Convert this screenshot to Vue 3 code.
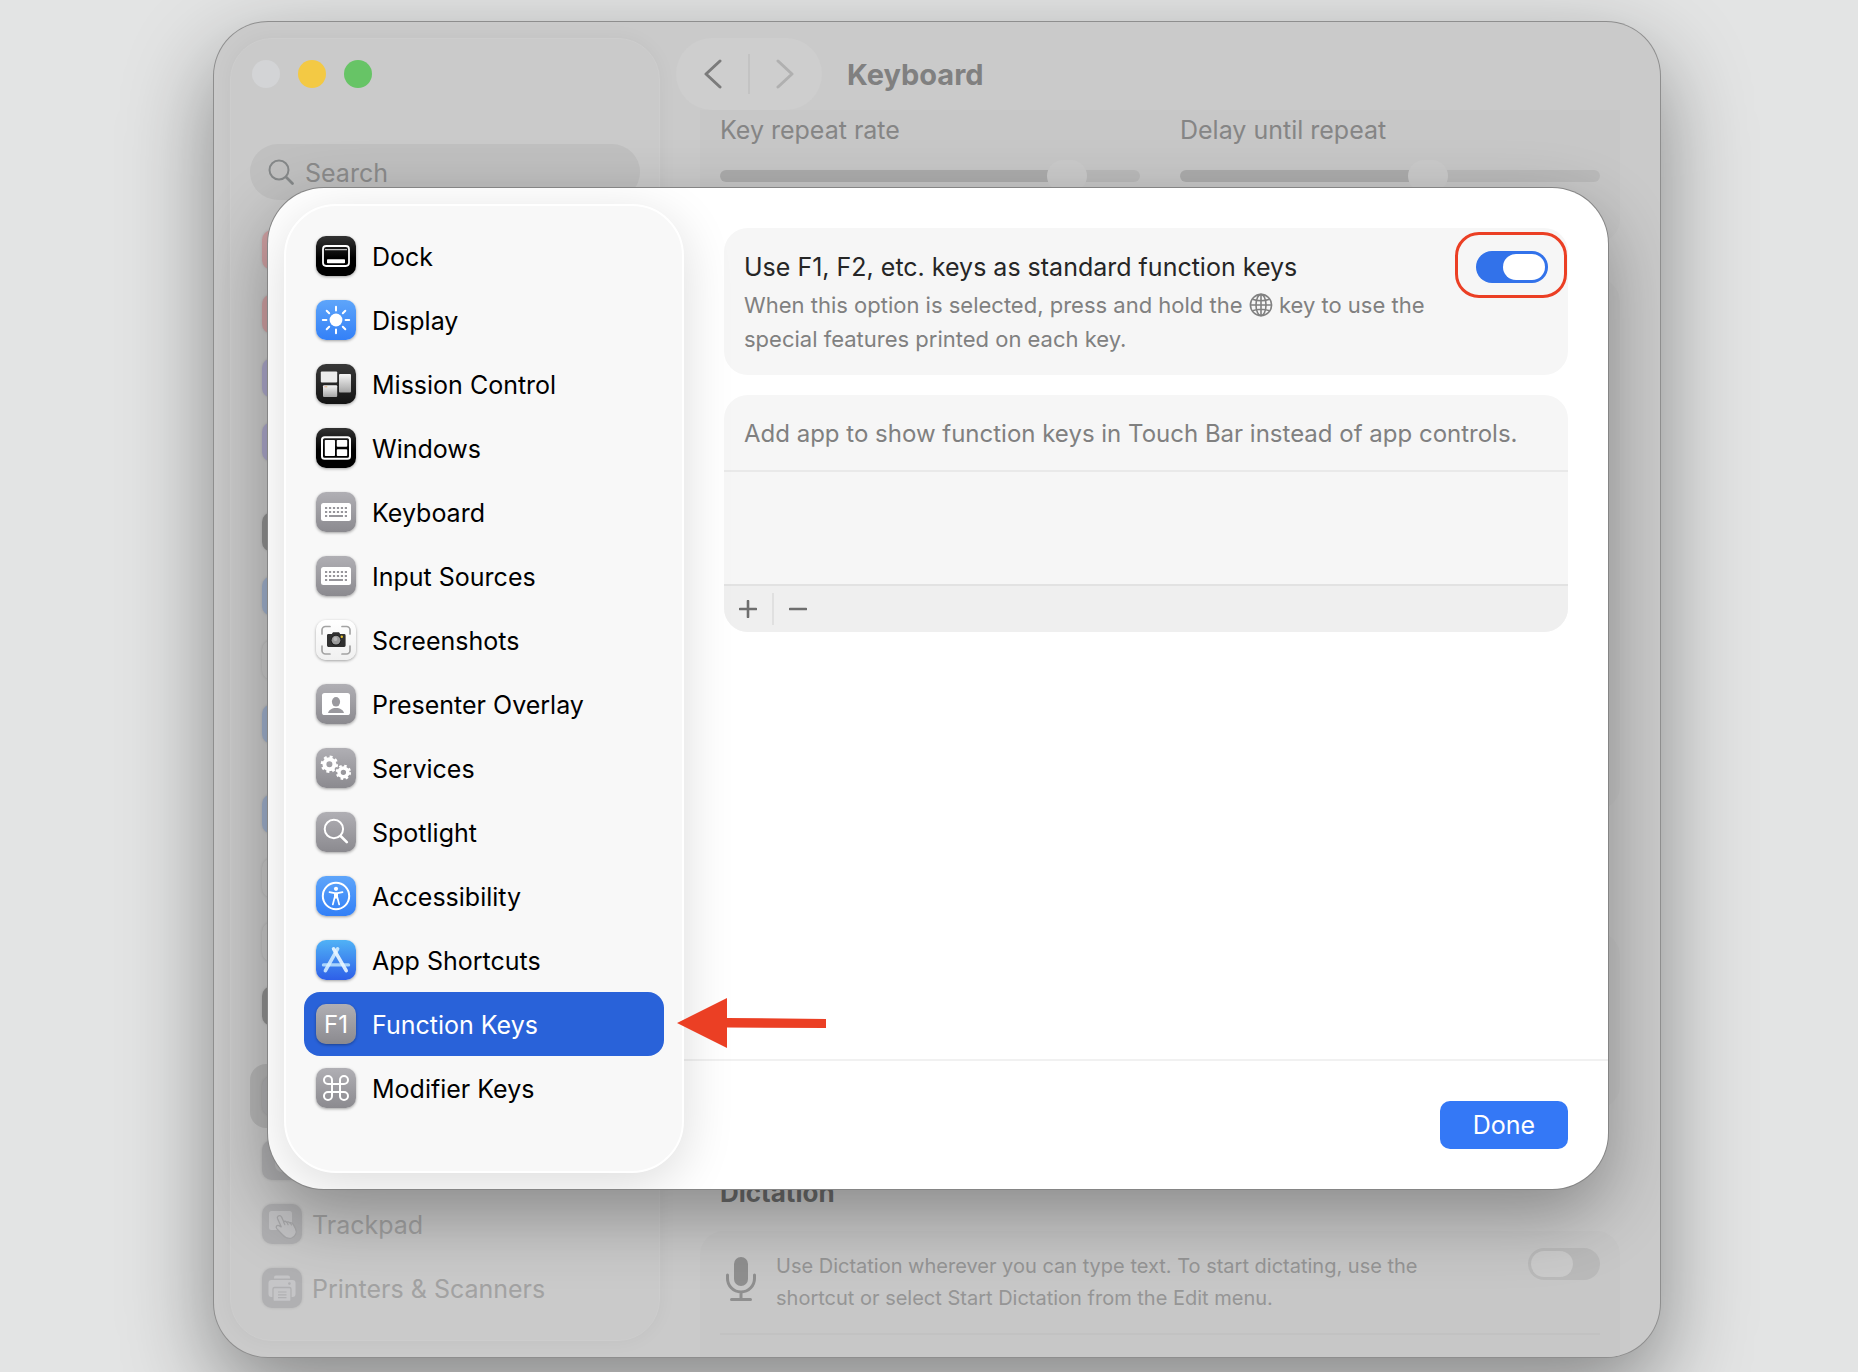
<script setup>
import { ref } from 'vue'

const keyboardGlyph = `
  <rect x="5" y="11" width="30" height="18" rx="2.5" fill="#fff"/>
  <path d="M9 16h22M9 20h22" stroke="#97969b" stroke-width="2.2" stroke-dasharray="2.2 1.76"/>
  <path d="M9 24h2.2M13 24h14M28.8 24H31" stroke="#97969b" stroke-width="2"/>`

const gear = (cx, cy, r) => {
  const ring = r * 0.58
  const teeth = r * 0.86
  const step = (2 * Math.PI * teeth) / 16
  return `<circle cx="${cx}" cy="${cy}" r="${ring}" fill="none" stroke="#fff" stroke-width="${r * 0.46}"/>
    <circle cx="${cx}" cy="${cy}" r="${teeth}" fill="none" stroke="#fff" stroke-width="${r * 0.3}" stroke-dasharray="${step}"/>`
}

// Sidebar entries of the keyboard shortcuts sheet
const shortcuts = [
  {
    label: 'Dock',
    tone: 'black',
    glyph: `<rect x="7" y="10" width="26" height="20" rx="3.2" fill="none" stroke="#fff" stroke-width="1.8"/>
      <path d="M9 13.6h22" stroke="#bbb" stroke-width="1.4"/>
      <rect x="11" y="23.2" width="18" height="4" rx="0.8" fill="#fff"/>`,
  },
  {
    label: 'Display',
    tone: 'blue',
    glyph: `<circle cx="20" cy="20" r="6.4" fill="#fff"/>
      <path d="M20 6.8v3.6M20 29.6v3.6M6.8 20h3.6M29.6 20h3.6M10.7 10.7l2.5 2.5M26.8 26.8l2.5 2.5M29.3 10.7l-2.5 2.5M13.2 26.8l-2.5 2.5" stroke="#fff" stroke-width="2" stroke-linecap="round"/>`,
  },
  {
    label: 'Mission Control',
    tone: 'charcoal',
    glyph: `<defs><linearGradient id="pane" x1="0" y1="0" x2="0" y2="1"><stop offset="0" stop-color="#f4f4f4"/><stop offset="1" stop-color="#a4a4a4"/></linearGradient></defs>
      <rect x="4.8" y="7.6" width="16.4" height="11" rx="1" fill="#ececec"/>
      <rect x="23" y="10" width="12" height="18.6" rx="1" fill="url(#pane)"/>
      <rect x="7" y="21.2" width="14.2" height="11.8" rx="1" fill="url(#pane)"/>
      <path d="M8.6 22.8h1" stroke="#e0705a"/><path d="M10.2 22.8h1" stroke="#d8b04c"/>`,
  },
  {
    label: 'Windows',
    tone: 'black',
    glyph: `<rect x="6" y="9.2" width="28" height="21.6" rx="2.6" fill="none" stroke="#fff" stroke-width="2"/>
      <rect x="8.8" y="12" width="10.2" height="16" rx="0.8" fill="#fff"/>
      <rect x="20.8" y="12" width="10.4" height="6.8" rx="0.8" fill="#fff"/>
      <rect x="20.8" y="21.2" width="10.4" height="6.8" rx="0.8" fill="#fff"/>`,
  },
  { label: 'Keyboard', tone: 'gray', glyph: keyboardGlyph },
  { label: 'Input Sources', tone: 'gray', glyph: keyboardGlyph },
  {
    label: 'Screenshots',
    tone: 'white',
    glyph: `<path d="M6 14v-4a3.5 3.5 0 0 1 3.5-3.5H14M26 6.5h4.5A3.5 3.5 0 0 1 34 10v4M34 26v4.5a3.5 3.5 0 0 1-3.5 3.5H26M14 34H9.5A3.5 3.5 0 0 1 6 30.5V26" fill="none" stroke="#a3a3a3" stroke-width="1.7" stroke-linecap="round"/>
      <path d="M15.8 14l1.2-1.8h6l1.2 1.8h4a1.4 1.4 0 0 1 1.4 1.4v10.2a1.4 1.4 0 0 1-1.4 1.4H12.4a1.4 1.4 0 0 1-1.4-1.4V15.4A1.4 1.4 0 0 1 12.4 14z" fill="#303030"/>
      <circle cx="20" cy="20.2" r="5.2" fill="#1a1a1a"/><circle cx="20" cy="20.2" r="4.4" fill="#9a9a9a"/><circle cx="19.4" cy="19" r="2" fill="#b9b9b9"/>
      <circle cx="25.8" cy="16.7" r="1.2" fill="#e8c22a"/>`,
  },
  {
    label: 'Presenter Overlay',
    tone: 'gray',
    glyph: `<rect x="6" y="9" width="28" height="22" rx="2.6" fill="#fff"/>
      <ellipse cx="20" cy="17.8" rx="4.1" ry="4.8" fill="#9a999e"/>
      <path d="M12 29c.6-3 4-5 8-5s7.400 2 8 5z" fill="#9a999e"/>`,
  },
  { label: 'Services', tone: 'gray', glyph: gear(13.4, 16.2, 8.6) + gear(27.4, 24.3, 7.6) },
  {
    label: 'Spotlight',
    tone: 'gray',
    glyph: `<circle cx="17.9" cy="17" r="9.2" fill="none" stroke="#fff" stroke-width="2"/>
      <path d="M24.6 24l6.200 6.200" stroke="#fff" stroke-width="2.6" stroke-linecap="round"/>`,
  },
  {
    label: 'Accessibility',
    tone: 'blue',
    glyph: `<circle cx="20" cy="20" r="13.2" fill="none" stroke="#fff" stroke-width="2"/>
      <circle cx="20" cy="12.8" r="2.1" fill="#fff"/>
      <path d="M13.5 16.2l5 1h3l5-1" fill="none" stroke="#fff" stroke-width="1.7" stroke-linecap="round" stroke-linejoin="round"/>
      <path d="M18 17h4v5.500H18z" fill="#fff"/>
      <path d="M18.6 21.500l-1.800 7M21.400 21.500l1.800 7" stroke="#fff" stroke-width="1.7" stroke-linecap="round"/>`,
  },
  {
    label: 'App Shortcuts',
    tone: 'store',
    glyph: `<path d="M7.5 24.9h25" stroke="#a9d4fb" stroke-width="3.4" stroke-linecap="round"/>
      <path d="M21.6 8.8L9.4 30.6" stroke="#d8f0ff" stroke-opacity=".85" stroke-width="3.6" stroke-linecap="round"/>
      <path d="M17.6 8.8l12.600 21.8" stroke="#eaf6ff" stroke-opacity=".9" stroke-width="3.6" stroke-linecap="round"/>`,
  },
  {
    label: 'Function Keys',
    tone: 'gray',
    glyph: `<text x="20" y="28.5" text-anchor="middle" font-size="24" fill="#fff">F1</text>`,
  },
  {
    label: 'Modifier Keys',
    tone: 'gray',
    glyph: `<path transform="translate(4 4) scale(1.333)" d="M15 6v12a3 3 0 1 0 3-3H6a3 3 0 1 0 3 3V6a3 3 0 1 0-3 3h12a3 3 0 1 0-3-3" fill="none" stroke="#fff" stroke-width="1.5"/>`,
  },
]

// Dimmed settings list, grouped the way System Settings groups its panes
const paneGroups = [
  [{ tone: 'red' }, { tone: 'red' }, { tone: 'purple' }, { tone: 'purple' }],
  [{ tone: 'dark' }, { tone: 'azure' }, { tone: 'pale' }, { tone: 'azure' }],
  [{ tone: 'azure' }, { tone: 'pale' }, { tone: 'pale' }, { tone: 'dark' }],
  [
    { tone: 'dim', current: true },
    { tone: 'dim', glyph: '<rect x="13" y="8" width="14" height="24" rx="7" fill="#bebebf"/>' },
    {
      tone: 'dim',
      label: 'Trackpad',
      glyph: `<rect x="7" y="7" width="23" height="19" rx="2.5" fill="#c4c4c6"/>
        <path d="M16.3 12c1.400-.8 2.700-.3 3.400 1.200l2 4.600c1-.8 2.100-.5 2.900.5 1-.8 2.200-.5 3 .6 1.500-.6 3 .1 3.900 2l2 3.700c2 4-.2 8.200-4 9.400-3.500 1-6.400-.2-9-3.200l-5.700-6.200c-1.500-1.800 0-3.600 2-3l2.400 1.200-3.700-8.200c-.5-1.200-.1-2 .8-2.600z" fill="#c4c4c6" stroke="#a8a8aa" stroke-width="1.3" stroke-linejoin="round"/>
        <path d="M21.8 18.400l1 2.200M25.2 18.800l.9 2M28.6 19.200l.8 1.800" stroke="#a8a8aa" stroke-width="1.2" stroke-linecap="round"/>`,
    },
    {
      tone: 'dim',
      label: 'Printers & Scanners',
      glyph: `<path d="M12 10.500V9.500A2 2 0 0 1 14 7.500h12a2 2 0 0 1 2 2v1z" fill="#c5c5c7"/>
        <rect x="6.5" y="12" width="27" height="17" rx="3" fill="#c5c5c7"/>
        <rect x="11" y="19.5" width="18" height="14" rx="1.5" fill="#c5c5c7" stroke="#b0b0b2" stroke-width="1.3"/>
        <path d="M16 24h8.500M16 26.800h8.500M16 29.600h8.500" stroke="#b0b0b2" stroke-width="1.2"/>
        <circle cx="27.4" cy="15.6" r="1.3" fill="#b0b0b2"/>`,
    },
  ],
]

const selected = ref('Function Keys')
const standardKeys = ref(true)
const dictation = ref(false)
const repeatRate = ref(86)
const repeatDelay = ref(60)
</script>

<template>
  <div class="desktop">
    <div class="window">
      <aside class="panes">
        <div class="lights">
          <button class="light" aria-label="Close"></button>
          <button class="light light-min" aria-label="Minimize"></button>
          <button class="light light-max" aria-label="Zoom"></button>
        </div>
        <label class="search">
          <svg width="27" height="27" viewBox="0 0 27 27" fill="none" stroke="#858889" stroke-width="2" stroke-linecap="round">
            <circle cx="11" cy="11" r="9.5" />
            <path d="M18 18l6.500 6.500" stroke-width="2.8" />
          </svg>
          <input type="text" placeholder="Search" aria-label="Search" />
        </label>
        <nav class="pane-groups">
          <div v-for="(group, g) in paneGroups" :key="g" class="pane-group">
            <a v-for="(pane, p) in group" :key="p" href="#" class="pane" :class="{ current: pane.current }">
              <svg class="icon" :class="pane.tone" viewBox="0 0 40 40" v-html="pane.glyph"></svg>
              <span v-if="pane.label" class="item-label">{{ pane.label }}</span>
            </a>
          </div>
        </nav>
      </aside>

      <main class="settings">
        <header class="toolbar">
          <div class="history">
            <button aria-label="Back">
              <svg width="18" height="30" viewBox="0 0 18 30"><path d="M16 2L2 15l14 13" fill="none" stroke="#7b7b7b" stroke-width="3" stroke-linecap="round" stroke-linejoin="round" /></svg>
            </button>
            <span class="history-line"></span>
            <button aria-label="Forward">
              <svg width="18" height="30" viewBox="0 0 18 30"><path d="M2 2l14 13L2 28" fill="none" stroke="#b0b0b0" stroke-width="3" stroke-linecap="round" stroke-linejoin="round" /></svg>
            </button>
          </div>
          <h1>Keyboard</h1>
        </header>

        <section class="group sliders">
          <label class="slider">
            Key repeat rate
            <input v-model="repeatRate" type="range" min="0" max="100" :style="{ '--fill': repeatRate + '%' }" />
          </label>
          <label class="slider">
            Delay until repeat
            <input v-model="repeatDelay" type="range" min="0" max="100" :style="{ '--fill': repeatDelay + '%' }" />
          </label>
        </section>
        <section class="group filler filler-tall"></section>
        <section class="group filler"></section>

        <h2>Dictation</h2>
        <section class="group dictation">
          <div class="dictation-row">
            <svg class="mic" width="30" height="44" viewBox="0 0 30 44" fill="none" stroke="#8f8f8f" stroke-width="3" stroke-linecap="round">
              <rect x="8" y="0" width="14" height="29" rx="7" fill="#8f8f8f" stroke="none" />
              <path d="M1.5 18v3.500a13.500 13.500 0 0 0 27 0V18M15 35v7M5.500 42.500h19" />
            </svg>
            <label for="dictation">
              Use Dictation wherever you can type text. To start dictating, use the shortcut or select Start Dictation
              from the Edit menu.
            </label>
            <input id="dictation" v-model="dictation" type="checkbox" class="switch muted" />
          </div>
        </section>
      </main>

      <div class="sheet" role="dialog" aria-label="Keyboard">
        <nav class="shortcuts">
          <button
            v-for="item in shortcuts"
            :key="item.label"
            class="shortcut"
            :class="{ selected: item.label === selected }"
            @click="selected = item.label"
          >
            <svg class="icon" :class="item.tone" viewBox="0 0 40 40" v-html="item.glyph"></svg>
            <span class="item-label">{{ item.label }}</span>
            <svg v-if="item.label === selected" class="arrow" width="150" height="50" viewBox="0 0 150 50">
              <path d="M0 25L50 0v20l99 1v9l-99-.5V50z" fill="#eb3f24" />
            </svg>
          </button>
        </nav>

        <div class="detail">
          <div class="cards">
            <section class="card option">
              <div class="option-text">
                <label for="standard-keys">Use F1, F2, etc. keys as standard function keys</label>
                <p id="standard-keys-note">
                  When this option is selected, press and hold the
                  <svg class="globe" width="24" height="24" viewBox="0 0 24 24" fill="none" stroke="#808080" stroke-width="1.6">
                    <circle cx="12" cy="12" r="10.6" />
                    <ellipse cx="12" cy="12" rx="5" ry="10.6" />
                    <path d="M12 1.4v21.200M1.400 12h21.200M3.500 6.200q8.500 3 17 0M3.500 17.800q8.500-3 17 0" />
                  </svg>
                  key to use the special features printed on each key.
                </p>
              </div>
              <span class="highlight">
                <input
                  id="standard-keys"
                  v-model="standardKeys"
                  type="checkbox"
                  class="switch"
                  aria-describedby="standard-keys-note"
                />
              </span>
            </section>

            <section class="card apps">
              <p>Add app to show function keys in Touch Bar instead of app controls.</p>
              <div class="app-list"></div>
              <div class="app-actions">
                <button aria-label="Add app">
                  <svg width="18" height="18" viewBox="0 0 18 18"><path d="M9 1v16M1 9h16" stroke="#6e6e6e" stroke-width="2.6" stroke-linecap="round" /></svg>
                </button>
                <span class="action-line"></span>
                <button aria-label="Remove app">
                  <svg width="18" height="18" viewBox="0 0 18 18"><path d="M1 9h16" stroke="#6e6e6e" stroke-width="2.6" stroke-linecap="round" /></svg>
                </button>
              </div>
            </section>
          </div>
          <footer class="sheet-footer">
            <button class="done">Done</button>
          </footer>
        </div>
      </div>
    </div>
  </div>
</template>

<style>
body {
  background: #e3e4e4;
}
</style>

<style scoped>
.desktop {
  box-sizing: border-box;
  min-height: 100vh;
  padding: 22px 198px 16px 214px;
  overflow: hidden;
  background: #e3e4e4;
  font-family: Inter, "Liberation Sans", sans-serif;
  font-size: 25px;
}

button {
  padding: 0;
  border: none;
  background: none;
  font: inherit;
  color: inherit;
}

/* Settings window */
.window {
  position: relative;
  display: flex;
  overflow: hidden;
  border-radius: 54px;
  background: #cacaca;
  box-shadow: 0 0 0 1px #8e8e8e, 0 34px 90px rgba(0, 0, 0, 0.42);
}

.panes {
  box-sizing: border-box;
  flex: none;
  width: 430px;
  margin: 16px 0 16px 16px;
  padding: 21px 19px 20px;
  border: 1px solid #cdcdcd;
  border-radius: 42px;
  background: #cacaca;
  box-shadow: 0 0 20px rgba(0, 0, 0, 0.04);
}

.lights {
  display: flex;
  gap: 18px;
  height: 28px;
  padding-left: 2px;
}

.light {
  width: 28px;
  height: 28px;
  border-radius: 50%;
  background: #d3d4d6;
}

.light-min {
  background: #f3c944;
}

.light-max {
  background: #67c466;
}

.search {
  display: flex;
  align-items: center;
  gap: 10px;
  height: 56px;
  margin-top: 56px;
  padding: 0 18px;
  border-radius: 28px;
  background: #c0c0c0;
}

.search input {
  flex: 1;
  min-width: 0;
  padding: 2px 0 0;
  border: none;
  background: none;
  font: inherit;
}

.search input::placeholder {
  color: #8b8b8b;
}

.pane-groups {
  display: flex;
  flex-direction: column;
  gap: 26px;
  margin-top: 18px;
}

.pane {
  display: flex;
  align-items: center;
  gap: 10px;
  height: 64px;
  padding: 0 12px;
  border-radius: 16px;
  color: #a2a2a2;
  text-decoration: none;
}

.pane.current {
  background: #b6b6b6;
}

.item-label {
  padding-top: 2px;
}

.icon {
  flex: none;
  width: 40px;
  height: 40px;
  border-radius: 10px;
  box-shadow: 0 1px 3px rgba(0, 0, 0, 0.35);
}

.pane .icon {
  box-shadow: 0 0 3px rgba(0, 0, 0, 0.12);
}

.black { background: linear-gradient(#333, #000 55%); }
.charcoal { background: linear-gradient(#383838, #141414); }
.blue { background: linear-gradient(#5ea5fa, #3380f7); }
.gray { background: linear-gradient(#b0afb4, #8b8a8f); }
.white { background: linear-gradient(#fff, #f0f0f0); }
.store { background: linear-gradient(#50b2f6, #2e5fe8); }
.red { background: #cfa0a2; }
.purple { background: #aba7ca; }
.azure { background: #9fb0cc; }
.dark { background: #909090; }
.pale { background: #c9c9c9; }
.dim { background: #b0b0b2; }

.settings {
  display: flex;
  flex: 1;
  flex-direction: column;
  min-width: 0;
  padding: 16px 40px 0;
}

.toolbar {
  display: flex;
  align-items: center;
  gap: 25px;
  margin-left: -24px;
}

.history {
  display: flex;
  align-items: center;
  justify-content: space-between;
  box-sizing: border-box;
  width: 146px;
  height: 72px;
  padding: 0 28px;
  border-radius: 36px;
  background: #cecece;
}

.history button {
  height: 30px;
  line-height: 0;
}

.history-line {
  width: 2px;
  height: 40px;
  background: #c3c3c3;
}

h1 {
  margin: 0;
  color: #808080;
  font-size: 29px;
  font-weight: 700;
}

.group {
  border-radius: 24px;
  background: #c7c7c7;
}

.sliders {
  display: flex;
  gap: 40px;
  padding: 3px 20px 47px;
  border-radius: 0 0 24px 24px;
}

.slider {
  flex: 1;
  color: #858585;
  line-height: 34px;
}

.slider input {
  display: block;
  width: 100%;
  height: 40px;
  margin: 9px 0 0;
  appearance: none;
  background: none;
}

.slider input::-webkit-slider-runnable-track {
  height: 12px;
  border-radius: 6px;
  background: linear-gradient(90deg, #acacac var(--fill), #bababa var(--fill));
}

.slider input::-webkit-slider-thumb {
  appearance: none;
  width: 40px;
  height: 32px;
  margin-top: -10px;
  border-radius: 16px;
  background: #cacaca;
}

.filler {
  flex: 1;
  margin-top: 122px;
}

.filler-tall {
  flex: 3;
  margin-top: 35px;
}

h2 {
  margin: 68px 20px 22px;
  color: #6a6a6a;
  font-size: 26px;
  font-weight: 700;
  line-height: 32px;
}

.dictation {
  padding: 16px 20px 22px;
  border-radius: 24px 24px 0 0;
}

.dictation-row {
  display: flex;
  align-items: flex-start;
  padding-bottom: 19px;
  border-bottom: 2px solid #c2c2c2;
  color: #959595;
  font-size: 20px;
  line-height: 32px;
}

.mic {
  flex: none;
  margin: 10px 20px 0 6px;
}

.dictation-row label {
  flex: 1;
  padding: 3px 90px 0 0;
}

.switch {
  position: relative;
  flex: none;
  width: 72px;
  height: 32px;
  margin: 0;
  border-radius: 16px;
  appearance: none;
  background: #d0d0d0;
}

.switch::before {
  content: "";
  position: absolute;
  top: 3px;
  left: 3px;
  width: 42px;
  height: 26px;
  border-radius: 13px;
  background: #fff;
}

.switch:checked {
  background: #3272ea;
}

.switch:checked::before {
  left: 27px;
}

.switch.muted {
  margin-top: 1px;
  background: #bababa;
}

.switch.muted::before {
  background: #cbcbcb;
}

/* Sheet over the window */
.sheet {
  position: absolute;
  inset: 166px 52px 168px 54px;
  display: flex;
  overflow: hidden;
  border-radius: 56px;
  background: #fff;
  box-shadow: 0 0 0 1px #858585, 0 26px 70px rgba(0, 0, 0, 0.32);
}

.shortcuts {
  position: relative;
  z-index: 1;
  box-sizing: border-box;
  flex: none;
  width: 400px;
  margin: 16px 0 16px 16px;
  padding: 18px;
  border: 2px solid #fff;
  border-radius: 52px;
  background: #f8f8f8;
  box-shadow: 0 12px 52px rgba(0, 0, 0, 0.14);
}

.shortcut {
  position: relative;
  display: flex;
  align-items: center;
  gap: 16px;
  width: 100%;
  height: 64px;
  padding: 0 12px;
  border-radius: 16px;
  color: #000;
  text-align: left;
}

.shortcut.selected {
  background: #2962d9;
  color: #fff;
}

.arrow {
  position: absolute;
  top: 6px;
  left: 373px;
}

.detail {
  display: flex;
  flex: 1;
  flex-direction: column;
  min-width: 0;
}

.cards {
  display: flex;
  flex: 1;
  flex-direction: column;
  gap: 20px;
  padding: 40px;
}

.card {
  border-radius: 24px;
  background: #f6f6f6;
}

.card p {
  margin: 0;
  color: #808080;
}

.option {
  display: flex;
  align-items: flex-start;
  padding: 4px 1px 19px 20px;
}

.option-text {
  flex: 1;
  padding-top: 17px;
}

.option-text label {
  display: block;
  color: #262626;
  line-height: 36px;
}

.option-text p {
  padding-top: 3px;
  font-size: 22px;
  line-height: 34px;
}

.globe {
  vertical-align: -4px;
}

.highlight {
  display: flex;
  padding: 16px 16px 12px 18px;
  border: 3px solid #eb3f24;
  border-radius: 24px;
}

.apps {
  overflow: hidden;
}

.apps p {
  padding: 21px 20px 19px;
  border-bottom: 2px solid #e9e9e9;
  font-size: 24px;
  line-height: 35px;
}

.app-list {
  height: 112px;
}

.app-actions {
  display: flex;
  align-items: center;
  gap: 15px;
  height: 46px;
  padding: 0 15px;
  border-top: 2px solid #e2e2e2;
  background: #efefef;
}

.app-actions button {
  height: 18px;
  line-height: 0;
}

.action-line {
  width: 2px;
  height: 32px;
  background: #e0e0e0;
}

.sheet-footer {
  display: flex;
  justify-content: flex-end;
  padding: 40px;
  border-top: 2px solid #f1f1f1;
}

.done {
  width: 128px;
  height: 48px;
  border-radius: 10px;
  background: #3478f6;
  color: #fff;
}
</style>
